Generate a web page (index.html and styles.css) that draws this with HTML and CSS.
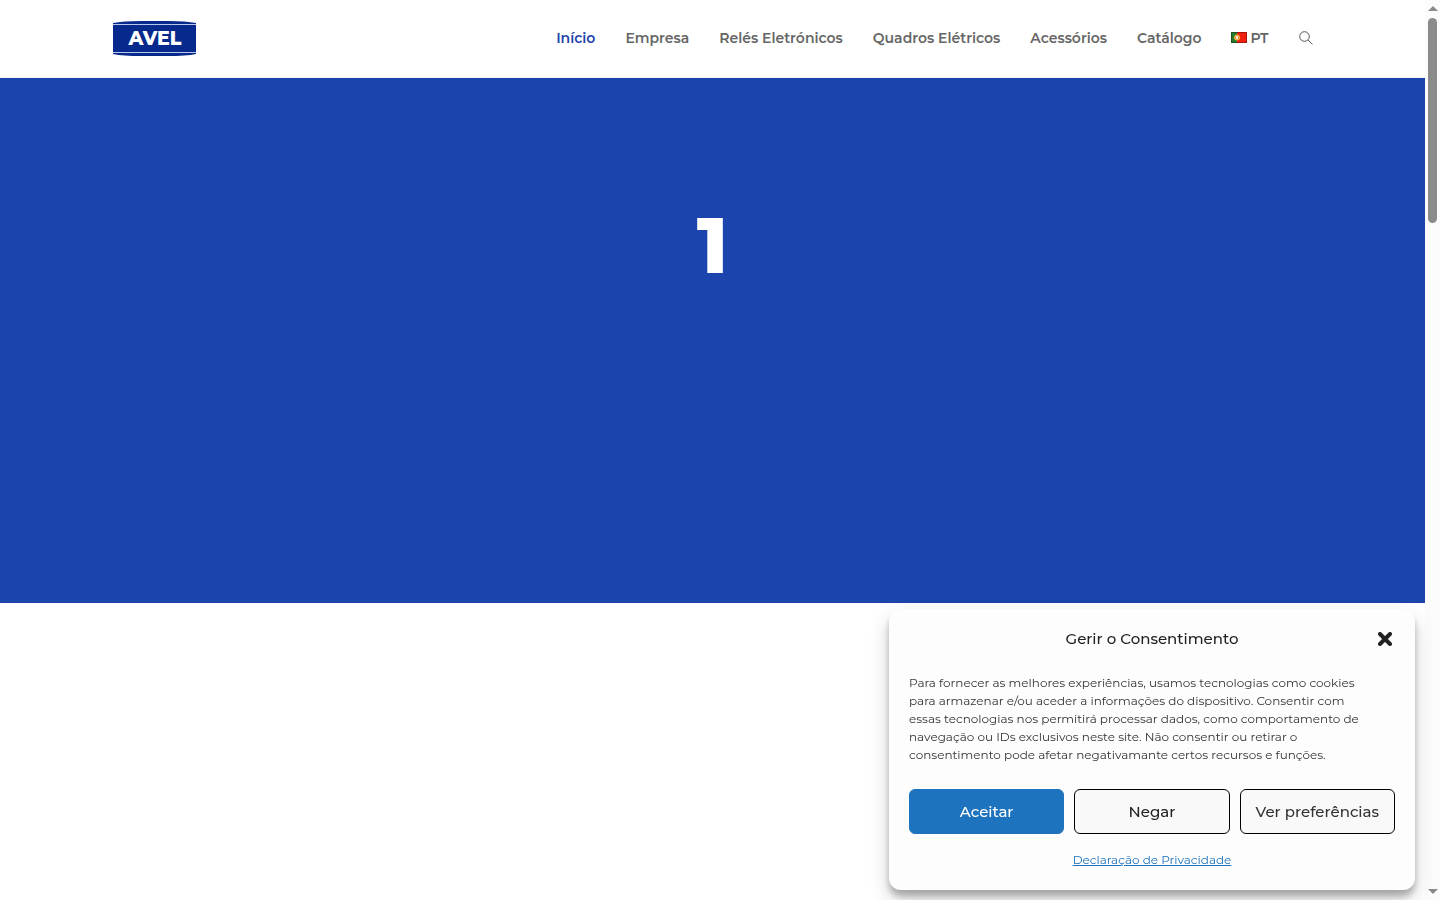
FILE: index.html
```html
<!DOCTYPE html>
<html lang="pt">
<head>
    <meta charset="UTF-8">
    <meta name="viewport" content="width=device-width, initial-scale=1.0">
    <title>AVEL</title>
    <link rel="stylesheet" href="styles.css">
</head>
<body>
<div class="page">
    <header class="site-header">
        <div class="container">
            <a class="logo" href="#" aria-label="AVEL">
                <svg width="83" height="35" viewBox="0 0 83 35">
                    <path d="M0 2Q10 0 28 0H55Q73 0 83 2V33Q73 35 55 35H28Q10 35 0 33Z" fill="#07288c"/>
                    <path d="M0 3.500H83M0 31.500H83" fill="none" stroke="#b9c8ea" stroke-width="1"/>
                    <text class="logo-text" x="42" y="24" text-anchor="middle">AVEL</text>
                </svg>
            </a>
            <nav class="menu">
                <a class="active" href="#">Início</a>
                <a href="#">Empresa</a>
                <a href="#">Relés Eletrónicos</a>
                <a href="#">Quadros Elétricos</a>
                <a href="#">Acessórios</a>
                <a href="#">Catálogo</a>
                <a class="lang" href="#">
                    <svg width="16" height="11" viewBox="0 0 16 11">
                        <rect width="16" height="11" fill="#f0200c"/>
                        <rect width="6" height="11" fill="#2a7a2e"/>
                        <circle cx="6" cy="5.500" r="2.600" fill="#f08a4c" stroke="#f0c040" stroke-width="1"/>
                        <rect x="5" y="4" width="2" height="3" fill="#fbe3d0"/>
                        <path d="M.5 .5H15.500V10.500H.5Z" fill="none" stroke="#000" stroke-opacity=".3"/>
                    </svg>
                    PT
                </a>
                <button class="search" type="button" aria-label="Pesquisar">
                    <svg width="14" height="14" viewBox="0 0 14 14" fill="none" stroke="#555" stroke-width="1">
                        <circle cx="5.500" cy="5.500" r="4.800"/>
                        <path d="M9 9L13.500 13.300"/>
                    </svg>
                </button>
            </nav>
        </div>
    </header>

    <main>
        <section class="hero">
            <h1>1</h1>
        </section>
    </main>
</div>

<div class="scrollbar" aria-hidden="true">
    <span class="arrow-up"></span>
    <span class="thumb"></span>
    <span class="arrow-down"></span>
</div>

<div class="cookie-box" role="dialog" aria-labelledby="cookie-title">
    <div class="cookie-header">
        <h2 id="cookie-title">Gerir o Consentimento</h2>
        <button class="close" type="button" aria-label="Fechar">
            <svg width="14" height="14" viewBox="0 0 14 14">
                <path d="M2 2L12 12M12 2L2 12" stroke="#222" stroke-width="4" stroke-linecap="round"/>
            </svg>
        </button>
    </div>
    <p class="cookie-text">Para fornecer as melhores experiências, usamos tecnologias como cookies para armazenar e/ou aceder a informações do dispositivo. Consentir com essas tecnologias nos permitirá processar dados, como comportamento de navegação ou IDs exclusivos neste site. Não consentir ou retirar o consentimento pode afetar negativamante certos recursos e funções.</p>
    <div class="cookie-buttons">
        <button class="btn accept" type="button">Aceitar</button>
        <button class="btn" type="button">Negar</button>
        <button class="btn prefs" type="button">Ver preferências</button>
    </div>
    <a class="privacy" href="#">Declaração de Privacidade</a>
</div>
</body>
</html>
```
FILE: styles.css
```css
* {
    box-sizing: border-box;
}

body {
    margin: 0;
    display: flex;
    min-height: 100vh;
    background-color: #fff;
    font-family: Montserrat, Inter, sans-serif;
}

a {
    text-decoration: none;
}

button {
    font-family: inherit;
    cursor: pointer;
}

.page {
    flex: 1;
    min-width: 0;
}

/* header */
.site-header {
    border-bottom: 1px solid #f1f1f1;
}

.container {
    display: flex;
    justify-content: space-between;
    align-items: center;
    max-width: 1200px;
    height: 77px;
    margin: 0 auto;
}

.logo svg {
    display: block;
}

.logo-text {
    font-size: 19px;
    font-weight: 800;
    fill: #fff;
}

.menu {
    display: flex;
    align-items: center;
    gap: 30px;
    padding-bottom: 2px;
}

.menu a {
    color: #666;
    font-size: 14px;
    font-weight: 600;
    line-height: 20px;
    white-space: nowrap;
}

.menu a.active {
    color: #1b44ac;
}

.menu .lang {
    display: flex;
    align-items: center;
    gap: 3px;
}

.search {
    padding: 0;
    border: none;
    background: none;
}

.search svg {
    display: block;
}

/* hero */
.hero {
    height: 525px;
    padding-top: 120px;
    background-color: #1b44ac;
    text-align: center;
}

.hero h1 {
    margin: 0;
    color: #fff;
    font-size: 78px;
    font-weight: 800;
    line-height: 94px;
}

/* scrollbar */
.scrollbar {
    display: flex;
    flex-direction: column;
    align-items: center;
    width: 15px;
    height: 100vh;
    padding: 6px 0;
    background-color: #fcfcfc;
}

.arrow-up,
.arrow-down {
    border-left: 5px solid transparent;
    border-right: 5px solid transparent;
}

.arrow-up {
    border-bottom: 5px solid #8b8b8b;
}

.arrow-down {
    margin-top: auto;
    border-top: 5px solid #8b8b8b;
}

.thumb {
    width: 9px;
    height: 205px;
    margin-top: 7px;
    border-radius: 5px;
    background-color: #8b8b8b;
}

/* cookies */
.cookie-box {
    position: fixed;
    right: 25px;
    bottom: 10px;
    width: 526px;
    max-width: 100%;
    padding: 20px;
    border-radius: 12px;
    background-color: #fdfdfd;
    box-shadow: 0 10px 20px rgba(0, 0, 0, 0.19), 0 6px 6px rgba(0, 0, 0, 0.23);
    color: #222;
}

.cookie-header {
    display: grid;
    grid-template-columns: 20px 1fr 20px;
    align-items: center;
}

.cookie-header h2 {
    grid-column: 2;
    margin: 0;
    font-size: 15px;
    font-weight: 500;
    line-height: 20px;
    text-align: center;
}

.close {
    display: flex;
    justify-content: center;
    padding: 0;
    border: none;
    background: none;
}

.cookie-text {
    margin: 25px 0;
    padding-right: 20px;
    font-size: 12px;
    line-height: 18px;
    color: #333;
}

.cookie-buttons {
    display: grid;
    grid-template-columns: repeat(3, 1fr);
    gap: 10px;
}

.btn {
    height: 45px;
    padding: 0 10px;
    border: 1px solid #000;
    border-radius: 6px;
    background-color: #f9f9f9;
    color: #222;
    font-size: 15px;
    font-weight: 500;
    white-space: nowrap;
}

.btn.accept {
    border-color: #1e73be;
    background-color: #1e73be;
    color: #fff;
}

.btn.prefs {
    color: #333;
}

.privacy {
    display: block;
    margin-top: 16px;
    color: #1e73be;
    font-size: 12px;
    line-height: 20px;
    text-align: center;
    text-decoration: underline;
}
```
